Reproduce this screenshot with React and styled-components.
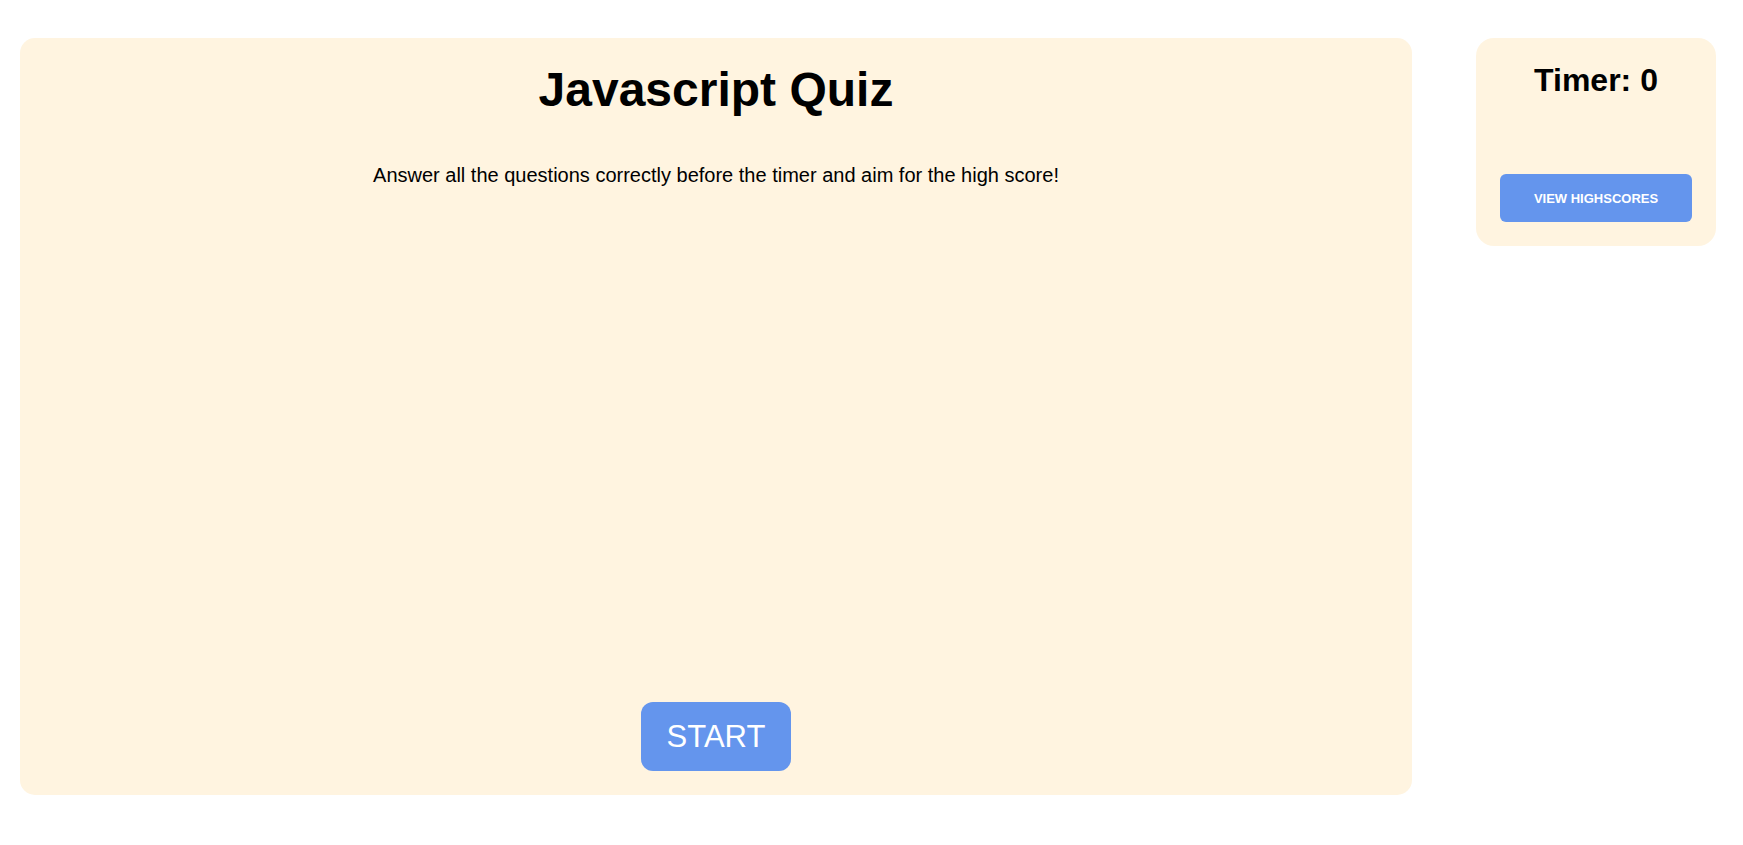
import React from "react";
import styled, { createGlobalStyle } from "styled-components";

const GlobalStyle = createGlobalStyle`
  body {
    margin: 0;
    font-family: "Liberation Sans", Arial, sans-serif;
    background: #fff;
    color: #000;
  }
`;

const App = () => {
  return (
    <>
      <GlobalStyle />
      <Page>
        <QuizCard>
          <Title>Javascript Quiz</Title>
          <Intro>Answer all the questions correctly before the timer and aim for the high score!</Intro>
          <StartButton>START</StartButton>
        </QuizCard>

        <SideCard>
          <Timer>Timer: 0</Timer>
          <ScoresButton>VIEW HIGHSCORES</ScoresButton>
        </SideCard>
      </Page>
    </>
  );
};

export default App;

//styling
const Page = styled.div`
  display: flex;
  align-items: flex-start;
  gap: 64px;
  padding: 38px 27px 0 20px;
`;

const QuizCard = styled.div`
  display: flex;
  flex-direction: column;
  align-items: center;
  width: 1392px;
  height: 757px;
  box-sizing: border-box;
  padding: 24px;
  background-color: #fff4e0;
  border-radius: 15px;
`;

const Title = styled.h1`
  margin: 0;
  font-size: 48px;
  font-weight: bold;
`;

const Intro = styled.p`
  margin: 47px 0 0;
  font-size: 20px;
`;

const StartButton = styled.button`
  margin-top: auto;
  width: 150px;
  height: 69px;
  background-color: #6495ed;
  color: #fff;
  border: none;
  border-radius: 12px;
  font-family: "Liberation Sans", Arial, sans-serif;
  font-size: 31px;
  cursor: pointer;
`;

const SideCard = styled.div`
  display: flex;
  flex-direction: column;
  align-items: stretch;
  width: 240px;
  height: 208px;
  box-sizing: border-box;
  padding: 24px;
  background-color: #fff4e0;
  border-radius: 18px;
`;

const Timer = styled.h2`
  margin: 0;
  text-align: center;
  font-size: 32px;
  font-weight: bold;
`;

const ScoresButton = styled.button`
  margin-top: auto;
  height: 48px;
  background-color: #6495ed;
  color: #fff;
  border: none;
  border-radius: 6px;
  font-family: "Liberation Sans", Arial, sans-serif;
  font-size: 13px;
  font-weight: bold;
  cursor: pointer;
`;
